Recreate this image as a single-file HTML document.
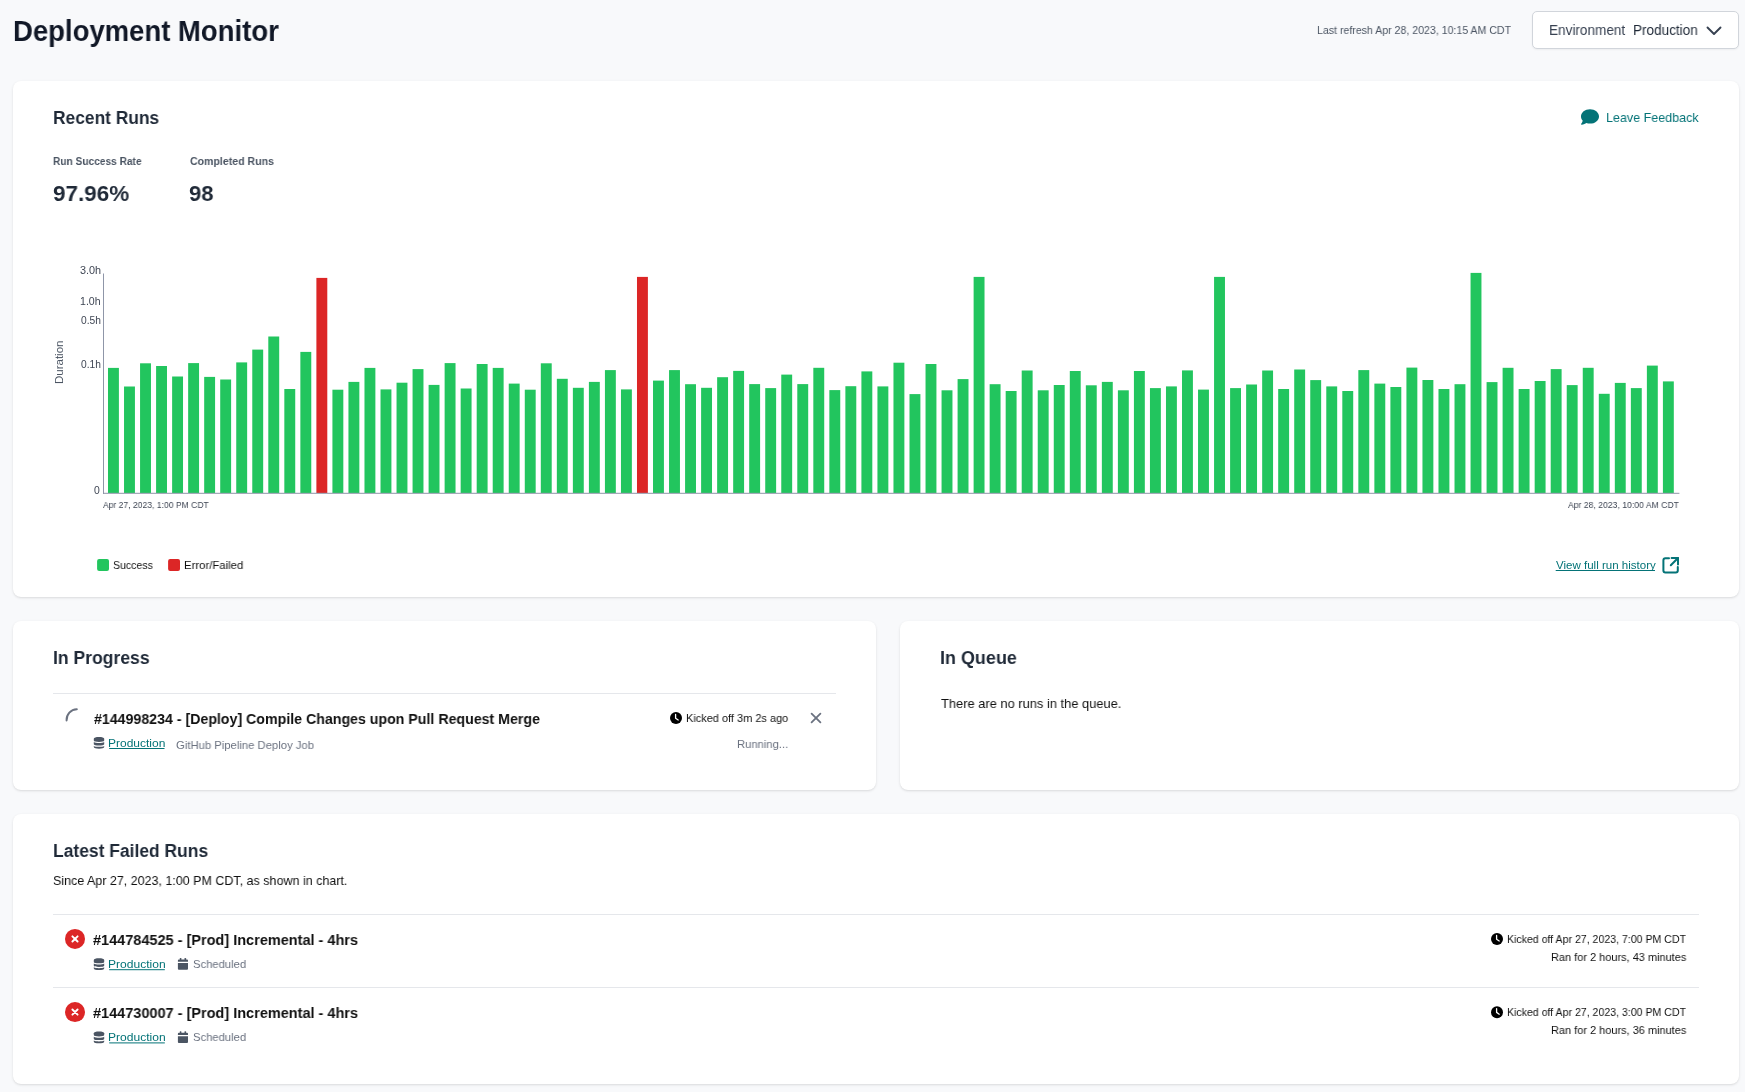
<!DOCTYPE html><html><head><meta charset="utf-8"><title>Deployment Monitor</title><style>
*{margin:0;padding:0;box-sizing:border-box}
html,body{width:1745px;height:1092px;overflow:hidden;background:#f8f9fb;font-family:"Liberation Sans",sans-serif}
.card{position:absolute;background:#fff;border-radius:8px;box-shadow:0 1px 3px 0 rgba(0,0,0,0.1),0 1px 2px -1px rgba(0,0,0,0.1)}
.t{position:absolute;white-space:pre;line-height:1;transform-origin:0 0;will-change:transform}
svg{position:absolute;left:0;top:0}
</style></head><body><div class="card" style="left:13px;top:81px;width:1726px;height:516px"></div><div class="card" style="left:13px;top:621px;width:863px;height:169px"></div><div class="card" style="left:900px;top:621px;width:839px;height:169px"></div><div class="card" style="left:13px;top:814px;width:1726px;height:270px"></div><div style="position:absolute;left:1532px;top:11px;width:207px;height:38px;background:#fff;border:1px solid #d1d5db;border-radius:5px;box-shadow:0 1px 2px rgba(0,0,0,0.05)"></div><svg width="1745" height="1092" viewBox="0 0 1745 1092"><rect x="108.00" y="367.90" width="10.9" height="125.10" fill="#22c55e"/><rect x="124.03" y="386.50" width="10.9" height="106.50" fill="#22c55e"/><rect x="140.06" y="363.30" width="10.9" height="129.70" fill="#22c55e"/><rect x="156.09" y="366.00" width="10.9" height="127.00" fill="#22c55e"/><rect x="172.12" y="376.50" width="10.9" height="116.50" fill="#22c55e"/><rect x="188.15" y="363.10" width="10.9" height="129.90" fill="#22c55e"/><rect x="204.18" y="376.90" width="10.9" height="116.10" fill="#22c55e"/><rect x="220.21" y="379.50" width="10.9" height="113.50" fill="#22c55e"/><rect x="236.24" y="362.40" width="10.9" height="130.60" fill="#22c55e"/><rect x="252.27" y="349.60" width="10.9" height="143.40" fill="#22c55e"/><rect x="268.30" y="336.50" width="10.9" height="156.50" fill="#22c55e"/><rect x="284.33" y="389.00" width="10.9" height="104.00" fill="#22c55e"/><rect x="300.36" y="351.90" width="10.9" height="141.10" fill="#22c55e"/><rect x="316.39" y="277.90" width="10.9" height="215.10" fill="#dc2626"/><rect x="332.42" y="389.70" width="10.9" height="103.30" fill="#22c55e"/><rect x="348.45" y="381.90" width="10.9" height="111.10" fill="#22c55e"/><rect x="364.48" y="367.90" width="10.9" height="125.10" fill="#22c55e"/><rect x="380.51" y="389.40" width="10.9" height="103.60" fill="#22c55e"/><rect x="396.54" y="382.70" width="10.9" height="110.30" fill="#22c55e"/><rect x="412.57" y="369.10" width="10.9" height="123.90" fill="#22c55e"/><rect x="428.60" y="384.90" width="10.9" height="108.10" fill="#22c55e"/><rect x="444.63" y="363.10" width="10.9" height="129.90" fill="#22c55e"/><rect x="460.66" y="388.50" width="10.9" height="104.50" fill="#22c55e"/><rect x="476.69" y="364.00" width="10.9" height="129.00" fill="#22c55e"/><rect x="492.72" y="367.90" width="10.9" height="125.10" fill="#22c55e"/><rect x="508.75" y="383.60" width="10.9" height="109.40" fill="#22c55e"/><rect x="524.78" y="389.70" width="10.9" height="103.30" fill="#22c55e"/><rect x="540.81" y="363.30" width="10.9" height="129.70" fill="#22c55e"/><rect x="556.84" y="378.80" width="10.9" height="114.20" fill="#22c55e"/><rect x="572.87" y="387.80" width="10.9" height="105.20" fill="#22c55e"/><rect x="588.90" y="381.90" width="10.9" height="111.10" fill="#22c55e"/><rect x="604.93" y="370.10" width="10.9" height="122.90" fill="#22c55e"/><rect x="620.96" y="389.40" width="10.9" height="103.60" fill="#22c55e"/><rect x="636.99" y="276.90" width="10.9" height="216.10" fill="#dc2626"/><rect x="653.02" y="380.60" width="10.9" height="112.40" fill="#22c55e"/><rect x="669.05" y="370.10" width="10.9" height="122.90" fill="#22c55e"/><rect x="685.08" y="384.20" width="10.9" height="108.80" fill="#22c55e"/><rect x="701.11" y="387.80" width="10.9" height="105.20" fill="#22c55e"/><rect x="717.14" y="377.20" width="10.9" height="115.80" fill="#22c55e"/><rect x="733.17" y="370.90" width="10.9" height="122.10" fill="#22c55e"/><rect x="749.20" y="384.10" width="10.9" height="108.90" fill="#22c55e"/><rect x="765.23" y="388.10" width="10.9" height="104.90" fill="#22c55e"/><rect x="781.26" y="374.60" width="10.9" height="118.40" fill="#22c55e"/><rect x="797.29" y="384.10" width="10.9" height="108.90" fill="#22c55e"/><rect x="813.32" y="367.80" width="10.9" height="125.20" fill="#22c55e"/><rect x="829.35" y="390.10" width="10.9" height="102.90" fill="#22c55e"/><rect x="845.38" y="386.20" width="10.9" height="106.80" fill="#22c55e"/><rect x="861.41" y="371.40" width="10.9" height="121.60" fill="#22c55e"/><rect x="877.44" y="386.40" width="10.9" height="106.60" fill="#22c55e"/><rect x="893.47" y="362.70" width="10.9" height="130.30" fill="#22c55e"/><rect x="909.50" y="394.10" width="10.9" height="98.90" fill="#22c55e"/><rect x="925.53" y="364.00" width="10.9" height="129.00" fill="#22c55e"/><rect x="941.56" y="390.30" width="10.9" height="102.70" fill="#22c55e"/><rect x="957.59" y="379.10" width="10.9" height="113.90" fill="#22c55e"/><rect x="973.62" y="276.90" width="10.9" height="216.10" fill="#22c55e"/><rect x="989.65" y="384.20" width="10.9" height="108.80" fill="#22c55e"/><rect x="1005.68" y="391.00" width="10.9" height="102.00" fill="#22c55e"/><rect x="1021.71" y="370.50" width="10.9" height="122.50" fill="#22c55e"/><rect x="1037.74" y="390.30" width="10.9" height="102.70" fill="#22c55e"/><rect x="1053.77" y="385.00" width="10.9" height="108.00" fill="#22c55e"/><rect x="1069.80" y="371.00" width="10.9" height="122.00" fill="#22c55e"/><rect x="1085.83" y="385.30" width="10.9" height="107.70" fill="#22c55e"/><rect x="1101.86" y="381.90" width="10.9" height="111.10" fill="#22c55e"/><rect x="1117.89" y="390.30" width="10.9" height="102.70" fill="#22c55e"/><rect x="1133.92" y="371.00" width="10.9" height="122.00" fill="#22c55e"/><rect x="1149.95" y="388.10" width="10.9" height="104.90" fill="#22c55e"/><rect x="1165.98" y="386.40" width="10.9" height="106.60" fill="#22c55e"/><rect x="1182.01" y="370.40" width="10.9" height="122.60" fill="#22c55e"/><rect x="1198.04" y="389.60" width="10.9" height="103.40" fill="#22c55e"/><rect x="1214.07" y="276.90" width="10.9" height="216.10" fill="#22c55e"/><rect x="1230.10" y="388.10" width="10.9" height="104.90" fill="#22c55e"/><rect x="1246.13" y="384.50" width="10.9" height="108.50" fill="#22c55e"/><rect x="1262.16" y="370.50" width="10.9" height="122.50" fill="#22c55e"/><rect x="1278.19" y="389.00" width="10.9" height="104.00" fill="#22c55e"/><rect x="1294.22" y="369.50" width="10.9" height="123.50" fill="#22c55e"/><rect x="1310.25" y="380.10" width="10.9" height="112.90" fill="#22c55e"/><rect x="1326.28" y="386.40" width="10.9" height="106.60" fill="#22c55e"/><rect x="1342.31" y="391.00" width="10.9" height="102.00" fill="#22c55e"/><rect x="1358.34" y="370.10" width="10.9" height="122.90" fill="#22c55e"/><rect x="1374.37" y="383.60" width="10.9" height="109.40" fill="#22c55e"/><rect x="1390.40" y="387.00" width="10.9" height="106.00" fill="#22c55e"/><rect x="1406.43" y="367.60" width="10.9" height="125.40" fill="#22c55e"/><rect x="1422.46" y="380.00" width="10.9" height="113.00" fill="#22c55e"/><rect x="1438.49" y="389.00" width="10.9" height="104.00" fill="#22c55e"/><rect x="1454.52" y="384.20" width="10.9" height="108.80" fill="#22c55e"/><rect x="1470.55" y="272.90" width="10.9" height="220.10" fill="#22c55e"/><rect x="1486.58" y="382.10" width="10.9" height="110.90" fill="#22c55e"/><rect x="1502.61" y="367.80" width="10.9" height="125.20" fill="#22c55e"/><rect x="1518.64" y="389.00" width="10.9" height="104.00" fill="#22c55e"/><rect x="1534.67" y="381.00" width="10.9" height="112.00" fill="#22c55e"/><rect x="1550.70" y="369.10" width="10.9" height="123.90" fill="#22c55e"/><rect x="1566.73" y="385.10" width="10.9" height="107.90" fill="#22c55e"/><rect x="1582.76" y="367.80" width="10.9" height="125.20" fill="#22c55e"/><rect x="1598.79" y="393.80" width="10.9" height="99.20" fill="#22c55e"/><rect x="1614.82" y="382.90" width="10.9" height="110.10" fill="#22c55e"/><rect x="1630.85" y="388.10" width="10.9" height="104.90" fill="#22c55e"/><rect x="1646.88" y="365.60" width="10.9" height="127.40" fill="#22c55e"/><rect x="1662.91" y="381.40" width="10.9" height="111.60" fill="#22c55e"/><rect x="103" y="273.5" width="1" height="220.5" fill="#8f96a8"/><rect x="103" y="492.8" width="1576.4" height="1" fill="#8f96a8"/><rect x="97.1" y="559" width="11.9" height="11.9" rx="2" fill="#22c55e"/><rect x="168.1" y="559" width="11.9" height="11.9" rx="2" fill="#dc2626"/><rect x="1555.70" y="570.00" width="99.30" height="1" fill="#047377"/><rect x="109.20" y="748.00" width="55.30" height="1" fill="#047377"/><rect x="109.20" y="969.20" width="55.60" height="1" fill="#047377"/><rect x="109.20" y="1042.40" width="55.60" height="1" fill="#047377"/><rect x="53" y="693" width="783" height="1" fill="#e5e7eb"/><rect x="53" y="914" width="1646" height="1" fill="#e5e7eb"/><rect x="53" y="987" width="1646" height="1" fill="#e5e7eb"/><polyline points="1707.5,27.5 1714,34 1720.5,27.5" fill="none" stroke="#374151" stroke-width="1.9" stroke-linecap="round" stroke-linejoin="round"/><g transform="translate(1581,109.2) scale(0.03516,0.0346)"><path fill="#047377" d="M512 208c0 114.9-114.6 208-256 208-37.1 0-72.3-6.4-104.1-17.9-11.9 8.7-31.3 20.6-54.3 30.6C73.6 439.1 44.7 448 16 448c-6.5 0-12.3-3.9-14.8-9.9c-2.5-6-1.1-12.8 3.4-17.4c.3-.3 .7-.7 1.3-1.4c1.1-1.2 2.8-3.1 4.9-5.7c4.1-5 9.6-12.4 15.2-21.6c10-16.6 19.5-38.4 21.4-62.9C17.7 294.8 0 253.1 0 208C0 93.1 114.6 0 256 0s256 93.1 256 208z"/></g><g fill="none" stroke="#047377" stroke-width="2" stroke-linecap="round" stroke-linejoin="round"><path d="M1669 558.2h-3.6a2 2 0 0 0-2 2v10.4a2 2 0 0 0 2 2h10.4a2 2 0 0 0 2-2v-3.6"/><path d="M1671.6 558h6.4v6.4"/><path d="M1678 558l-7.2 7.2"/></g><path d="M66.6 720.4A10.6 10.6 0 0 1 76.8 709.2" fill="none" stroke="#6b7280" stroke-width="2" stroke-linecap="round"/><g transform="translate(93.80,736.90)" fill="#4b5563"><path d="M0 1.8C0 .6 2.3 0 5.2 0S10.4 .6 10.4 1.8V3.6C10.4 4.6 8 5 5.2 5S0 4.6 0 3.6Z"/><path d="M0 5.2C1 6 3 6.2 5.2 6.2S9.4 6 10.4 5.2V7.4C10.4 8.2 8 8.6 5.2 8.6S0 8.2 0 7.4Z"/><path d="M0 9C1 9.7 3 9.9 5.2 9.9S9.4 9.7 10.4 9V10.2C10.4 11.2 8 11.8 5.2 11.8S0 11.2 0 10.2Z"/></g><circle cx="676.00" cy="718.00" r="6" fill="#000"/><path d="M675.60 714.40V718.20L678.20 720.00" fill="none" stroke="#fff" stroke-width="1.3" stroke-linecap="round" stroke-linejoin="round"/><path d="M811.6 713.6L820.4 722.4M820.4 713.6L811.6 722.4" stroke="#6b7280" stroke-width="1.8" stroke-linecap="round"/><circle cx="75" cy="938.90" r="10" fill="#dc2626"/><path d="M72.4 936.30L77.6 941.50M77.6 936.30L72.4 941.50" stroke="#fff" stroke-width="1.9" stroke-linecap="round"/><g transform="translate(93.80,958.30)" fill="#4b5563"><path d="M0 1.8C0 .6 2.3 0 5.2 0S10.4 .6 10.4 1.8V3.6C10.4 4.6 8 5 5.2 5S0 4.6 0 3.6Z"/><path d="M0 5.2C1 6 3 6.2 5.2 6.2S9.4 6 10.4 5.2V7.4C10.4 8.2 8 8.6 5.2 8.6S0 8.2 0 7.4Z"/><path d="M0 9C1 9.7 3 9.9 5.2 9.9S9.4 9.7 10.4 9V10.2C10.4 11.2 8 11.8 5.2 11.8S0 11.2 0 10.2Z"/></g><g transform="translate(177.90,958.00)" fill="#4b5563"><rect x="1.9" y="0" width="1.6" height="2.2" rx=".6"/><rect x="6.6" y="0" width="1.6" height="2.2" rx=".6"/><path d="M0 2.6a1 1 0 0 1 1-1h8.1a1 1 0 0 1 1 1V3.8H0Z"/><path d="M0 5H10.1V10.8a1 1 0 0 1-1 1H1a1 1 0 0 1-1-1Z"/></g><circle cx="1497.00" cy="939.00" r="6" fill="#000"/><path d="M1496.60 935.40V939.20L1499.20 941.00" fill="none" stroke="#fff" stroke-width="1.3" stroke-linecap="round" stroke-linejoin="round"/><circle cx="75" cy="1012.10" r="10" fill="#dc2626"/><path d="M72.4 1009.50L77.6 1014.70M77.6 1009.50L72.4 1014.70" stroke="#fff" stroke-width="1.9" stroke-linecap="round"/><g transform="translate(93.80,1031.50)" fill="#4b5563"><path d="M0 1.8C0 .6 2.3 0 5.2 0S10.4 .6 10.4 1.8V3.6C10.4 4.6 8 5 5.2 5S0 4.6 0 3.6Z"/><path d="M0 5.2C1 6 3 6.2 5.2 6.2S9.4 6 10.4 5.2V7.4C10.4 8.2 8 8.6 5.2 8.6S0 8.2 0 7.4Z"/><path d="M0 9C1 9.7 3 9.9 5.2 9.9S9.4 9.7 10.4 9V10.2C10.4 11.2 8 11.8 5.2 11.8S0 11.2 0 10.2Z"/></g><g transform="translate(177.90,1031.20)" fill="#4b5563"><rect x="1.9" y="0" width="1.6" height="2.2" rx=".6"/><rect x="6.6" y="0" width="1.6" height="2.2" rx=".6"/><path d="M0 2.6a1 1 0 0 1 1-1h8.1a1 1 0 0 1 1 1V3.8H0Z"/><path d="M0 5H10.1V10.8a1 1 0 0 1-1 1H1a1 1 0 0 1-1-1Z"/></g><circle cx="1497.00" cy="1012.20" r="6" fill="#000"/><path d="M1496.60 1008.60V1012.40L1499.20 1014.20" fill="none" stroke="#fff" stroke-width="1.3" stroke-linecap="round" stroke-linejoin="round"/></svg><div class="t" style="left:12.73px;top:16.21px;font-size:29.40px;font-weight:700;color:#111827;transform:scaleX(0.9355)">Deployment Monitor</div><div class="t" style="left:1316.88px;top:25.03px;font-size:11.50px;font-weight:400;color:#4b5563;transform:scaleX(0.9200)">Last refresh Apr 28, 2023, 10:15 AM CDT</div><div class="t" style="left:1548.65px;top:23.44px;font-size:14.30px;font-weight:400;color:#374151;transform:scaleX(0.9494)">Environment</div><div class="t" style="left:1632.75px;top:23.44px;font-size:14.30px;font-weight:400;color:#1f2937;transform:scaleX(0.9463)">Production</div><div class="t" style="left:52.99px;top:107.96px;font-size:19.10px;font-weight:700;color:#1f2937;transform:scaleX(0.9096)">Recent Runs</div><div class="t" style="left:1605.97px;top:111.12px;font-size:13.50px;font-weight:400;color:#047377;transform:scaleX(0.9283)">Leave Feedback</div><div class="t" style="left:52.72px;top:155.62px;font-size:11.50px;font-weight:700;color:#4b5563;transform:scaleX(0.8828)">Run Success Rate</div><div class="t" style="left:190.40px;top:155.62px;font-size:11.50px;font-weight:700;color:#4b5563;transform:scaleX(0.9187)">Completed Runs</div><div class="t" style="left:52.62px;top:181.73px;font-size:22.90px;font-weight:700;color:#1f2937;transform:scaleX(0.9816)">97.96%</div><div class="t" style="left:189.44px;top:181.73px;font-size:22.90px;font-weight:700;color:#1f2937;transform:scaleX(0.9625)">98</div><div class="t" style="left:79.53px;top:266.13px;font-size:10.20px;font-weight:400;color:#3f4654;transform:scaleX(1.0667)">3.0h</div><div class="t" style="left:80.16px;top:297.03px;font-size:10.20px;font-weight:400;color:#3f4654;transform:scaleX(1.0389)">1.0h</div><div class="t" style="left:80.80px;top:316.13px;font-size:10.20px;font-weight:400;color:#3f4654;transform:scaleX(1.0053)">0.5h</div><div class="t" style="left:80.80px;top:360.13px;font-size:10.20px;font-weight:400;color:#3f4654;transform:scaleX(1.0053)">0.1h</div><div class="t" style="left:93.90px;top:486.13px;font-size:10.20px;font-weight:400;color:#3f4654;transform:scaleX(1.0200)">0</div><div class="t" style="left:103.30px;top:500.38px;font-size:9.90px;font-weight:400;color:#3f4654;transform:scaleX(0.8680)">Apr 27, 2023, 1:00 PM CDT</div><div class="t" style="left:1567.70px;top:500.38px;font-size:9.90px;font-weight:400;color:#3f4654;transform:scaleX(0.8748)">Apr 28, 2023, 10:00 AM CDT</div><div class="t" style="left:112.78px;top:560.02px;font-size:11.50px;font-weight:400;color:#111111;transform:scaleX(0.9167)">Success</div><div class="t" style="left:184.01px;top:560.02px;font-size:11.50px;font-weight:400;color:#111111;transform:scaleX(0.9864)">Error/Failed</div><div class="t" style="left:1555.70px;top:559.73px;font-size:11.50px;font-weight:400;color:#047377;transform:scaleX(1.0030)">View full run history</div><div class="t" style="left:52.88px;top:647.97px;font-size:19.10px;font-weight:700;color:#1f2937;transform:scaleX(0.9194)">In Progress</div><div class="t" style="left:93.60px;top:712.19px;font-size:14.60px;font-weight:700;color:#111111;transform:scaleX(0.9715)">#144998234 - [Deploy] Compile Changes upon Pull Request Merge</div><div class="t" style="left:108.16px;top:737.73px;font-size:11.50px;font-weight:400;color:#047377;transform:scaleX(1.0434)">Production</div><div class="t" style="left:176.42px;top:740.12px;font-size:11.50px;font-weight:400;color:#6b7280;transform:scaleX(0.9813)">GitHub Pipeline Deploy Job</div><div class="t" style="left:685.65px;top:712.92px;font-size:11.50px;font-weight:400;color:#111111;transform:scaleX(0.9538)">Kicked off 3m 2s ago</div><div class="t" style="left:736.62px;top:739.02px;font-size:11.50px;font-weight:400;color:#6b7280;transform:scaleX(0.9765)">Running...</div><div class="t" style="left:939.96px;top:647.97px;font-size:19.10px;font-weight:700;color:#1f2937;transform:scaleX(0.9413)">In Queue</div><div class="t" style="left:940.90px;top:697.22px;font-size:13.50px;font-weight:400;color:#111111;transform:scaleX(0.9543)">There are no runs in the queue.</div><div class="t" style="left:52.89px;top:840.97px;font-size:19.10px;font-weight:700;color:#1f2937;transform:scaleX(0.9137)">Latest Failed Runs</div><div class="t" style="left:52.88px;top:874.32px;font-size:13.50px;font-weight:400;color:#111111;transform:scaleX(0.9250)">Since Apr 27, 2023, 1:00 PM CDT, as shown in chart.</div><div class="t" style="left:93.20px;top:932.89px;font-size:14.60px;font-weight:700;color:#111111;transform:scaleX(0.9932)">#144784525 - [Prod] Incremental - 4hrs</div><div class="t" style="left:108.15px;top:959.02px;font-size:11.50px;font-weight:400;color:#047377;transform:scaleX(1.0491)">Production</div><div class="t" style="left:192.62px;top:959.02px;font-size:11.50px;font-weight:400;color:#6b7280;transform:scaleX(0.9774)">Scheduled</div><div class="t" style="left:1506.98px;top:933.92px;font-size:11.50px;font-weight:400;color:#111111;transform:scaleX(0.9191)">Kicked off Apr 27, 2023, 7:00 PM CDT</div><div class="t" style="left:1550.85px;top:951.73px;font-size:11.50px;font-weight:400;color:#111111;transform:scaleX(0.9532)">Ran for 2 hours, 43 minutes</div><div class="t" style="left:93.20px;top:1006.09px;font-size:14.60px;font-weight:700;color:#111111;transform:scaleX(0.9932)">#144730007 - [Prod] Incremental - 4hrs</div><div class="t" style="left:108.15px;top:1032.22px;font-size:11.50px;font-weight:400;color:#047377;transform:scaleX(1.0491)">Production</div><div class="t" style="left:192.62px;top:1032.22px;font-size:11.50px;font-weight:400;color:#6b7280;transform:scaleX(0.9774)">Scheduled</div><div class="t" style="left:1506.98px;top:1007.12px;font-size:11.50px;font-weight:400;color:#111111;transform:scaleX(0.9191)">Kicked off Apr 27, 2023, 3:00 PM CDT</div><div class="t" style="left:1550.85px;top:1024.92px;font-size:11.50px;font-weight:400;color:#111111;transform:scaleX(0.9532)">Ran for 2 hours, 36 minutes</div><div class="t" style="left:53.96px;top:384.40px;font-size:11.50px;color:#4b5563;transform:translate(0,0) rotate(-90deg) scaleX(1.0)">Duration</div></body></html>
